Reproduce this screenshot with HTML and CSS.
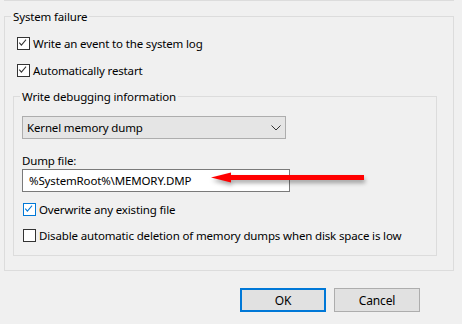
FILE: index.html
```html
<!DOCTYPE html>
<html>
<head>
<meta charset="utf-8">
<link rel="stylesheet" href="styles.css">
</head>
<body>
<div class="prev"></div>
<fieldset class="group outer">
  <legend class="legend">System failure</legend>
  <div class="outer-body">
    <label class="row row1">
      <span class="cb checked"><svg viewBox="0 0 13 13" width="11" height="11"><polyline points="1.5,5.5 4,8.5 9.5,2" /></svg></span>
      <span class="lbl">Write an event to the system log</span>
    </label>
    <label class="row row2">
      <span class="cb checked"><svg viewBox="0 0 13 13" width="11" height="11"><polyline points="1.5,5.5 4,8.5 9.5,2" /></svg></span>
      <span class="lbl">Automatically restart</span>
    </label>
    <fieldset class="group inner">
      <legend class="legend">Write debugging information</legend>
      <div class="inner-body">
        <div class="select">
          <span class="select-text">Kernel memory dump</span>
          <svg class="chev" viewBox="0 0 10 6" width="10" height="6"><polyline points="0.5,0.5 5,5 9.5,0.5" /></svg>
        </div>
        <div class="field-label">Dump file:</div>
        <div class="textbox">%SystemRoot%\MEMORY.DMP</div>
        <label class="row row3">
          <span class="cb focus"><svg viewBox="0 0 13 13" width="11" height="11"><polyline points="1.5,5.5 4,8.5 9.5,2" /></svg></span>
          <span class="lbl">Overwrite any existing file</span>
        </label>
        <label class="row row4">
          <span class="cb"></span>
          <span class="lbl">Disable automatic deletion of memory dumps when disk space is low</span>
        </label>
      </div>
    </fieldset>
  </div>
</fieldset>
<div class="buttons">
  <button class="btn default">OK</button>
  <button class="btn">Cancel</button>
</div>
<svg class="arrow" width="170" height="24" viewBox="0 0 170 24">
  <g>
    <rect x="24" y="7" width="134" height="5" fill="#ff0000"/>
    <polygon points="5,9.5 25,4.5 25,14.5" fill="#ff0000"/>
  </g>
</svg>
</body>
</html>
```
FILE: styles.css
```css
html, body {
  margin: 0;
  padding: 0;
}
body {
  width: 462px;
  height: 324px;
  background: #f0f0f0;
  font-family: "Noto Sans", "Open Sans", sans-serif;
  font-size: 11.5px;
  letter-spacing: -0.15px;
  color: #000;
  overflow: hidden;
  position: relative;
}
.prev {
  margin: 0 8px 0 4px;
  height: 0;
  border-bottom: 1px solid #dcdcdc;
}
.group {
  border: 1px solid #dcdcdc;
  padding: 0;
  min-width: 0;
}
.outer {
  margin: 8px 8px 0 4px;
}
.legend {
  margin-left: 6px;
  padding: 0 2px;
  line-height: 15px;
  height: 15px;
}
.outer-body {
  padding: 13px 16px 14px 12px;
}
.row {
  display: flex;
  align-items: center;
  gap: 3px;
  height: 13px;
  line-height: 15px;
  white-space: nowrap;
}
.row2 { margin-top: 14px; }
.cb {
  box-sizing: border-box;
  width: 13px;
  height: 13px;
  border: 1px solid #333;
  background: #fff;
  display: flex;
  align-items: center;
  justify-content: center;
  flex: none;
}
.cb svg polyline {
  fill: none;
  stroke: #333;
  stroke-width: 1.2;
}
.cb.focus { border-color: #0078d7; }
.cb.focus svg polyline { stroke: #0078d7; }
.inner {
  margin: 12px 0 0 -4px;
}
.inner-body {
  padding: 12px 8px 13px 8px;
}
.select {
  box-sizing: border-box;
  width: 264px;
  height: 23px;
  border: 1px solid #adadad;
  background: #e5e5e5;
  display: flex;
  align-items: center;
  justify-content: space-between;
  padding: 0 4px 0 4px;
}
.chev polyline {
  fill: none;
  stroke: #333;
  stroke-width: 1;
}
.field-label {
  margin-top: 14px;
  line-height: 15px;
  height: 15px;
}
.textbox {
  box-sizing: border-box;
  margin-top: 1px;
  width: 268px;
  height: 23px;
  border: 1px solid #7a7a7a;
  background: #fff;
  line-height: 21px;
  padding-left: 6px;
}
.row3 { margin-top: 11px; }
.row3 .cb { margin-left: 1px; }
.row4 { margin-top: 13px; }
.row4 .cb { margin-left: 1px; }
.buttons {
  display: flex;
  justify-content: flex-end;
  gap: 8px;
  margin: 17px 42px 0 0;
}
.btn {
  box-sizing: border-box;
  width: 86px;
  height: 24px;
  background: #e1e1e1;
  border: 1px solid #adadad;
  font-family: inherit;
  font-size: 12px;
  letter-spacing: inherit;
  color: #000;
  padding: 0;
}
.btn.default {
  border: 2px solid #0078d7;
}
.arrow {
  position: absolute;
  left: 206px;
  top: 168px;
  filter: drop-shadow(1px 3px 2px rgba(0, 0, 0, 0.35));
}
```
